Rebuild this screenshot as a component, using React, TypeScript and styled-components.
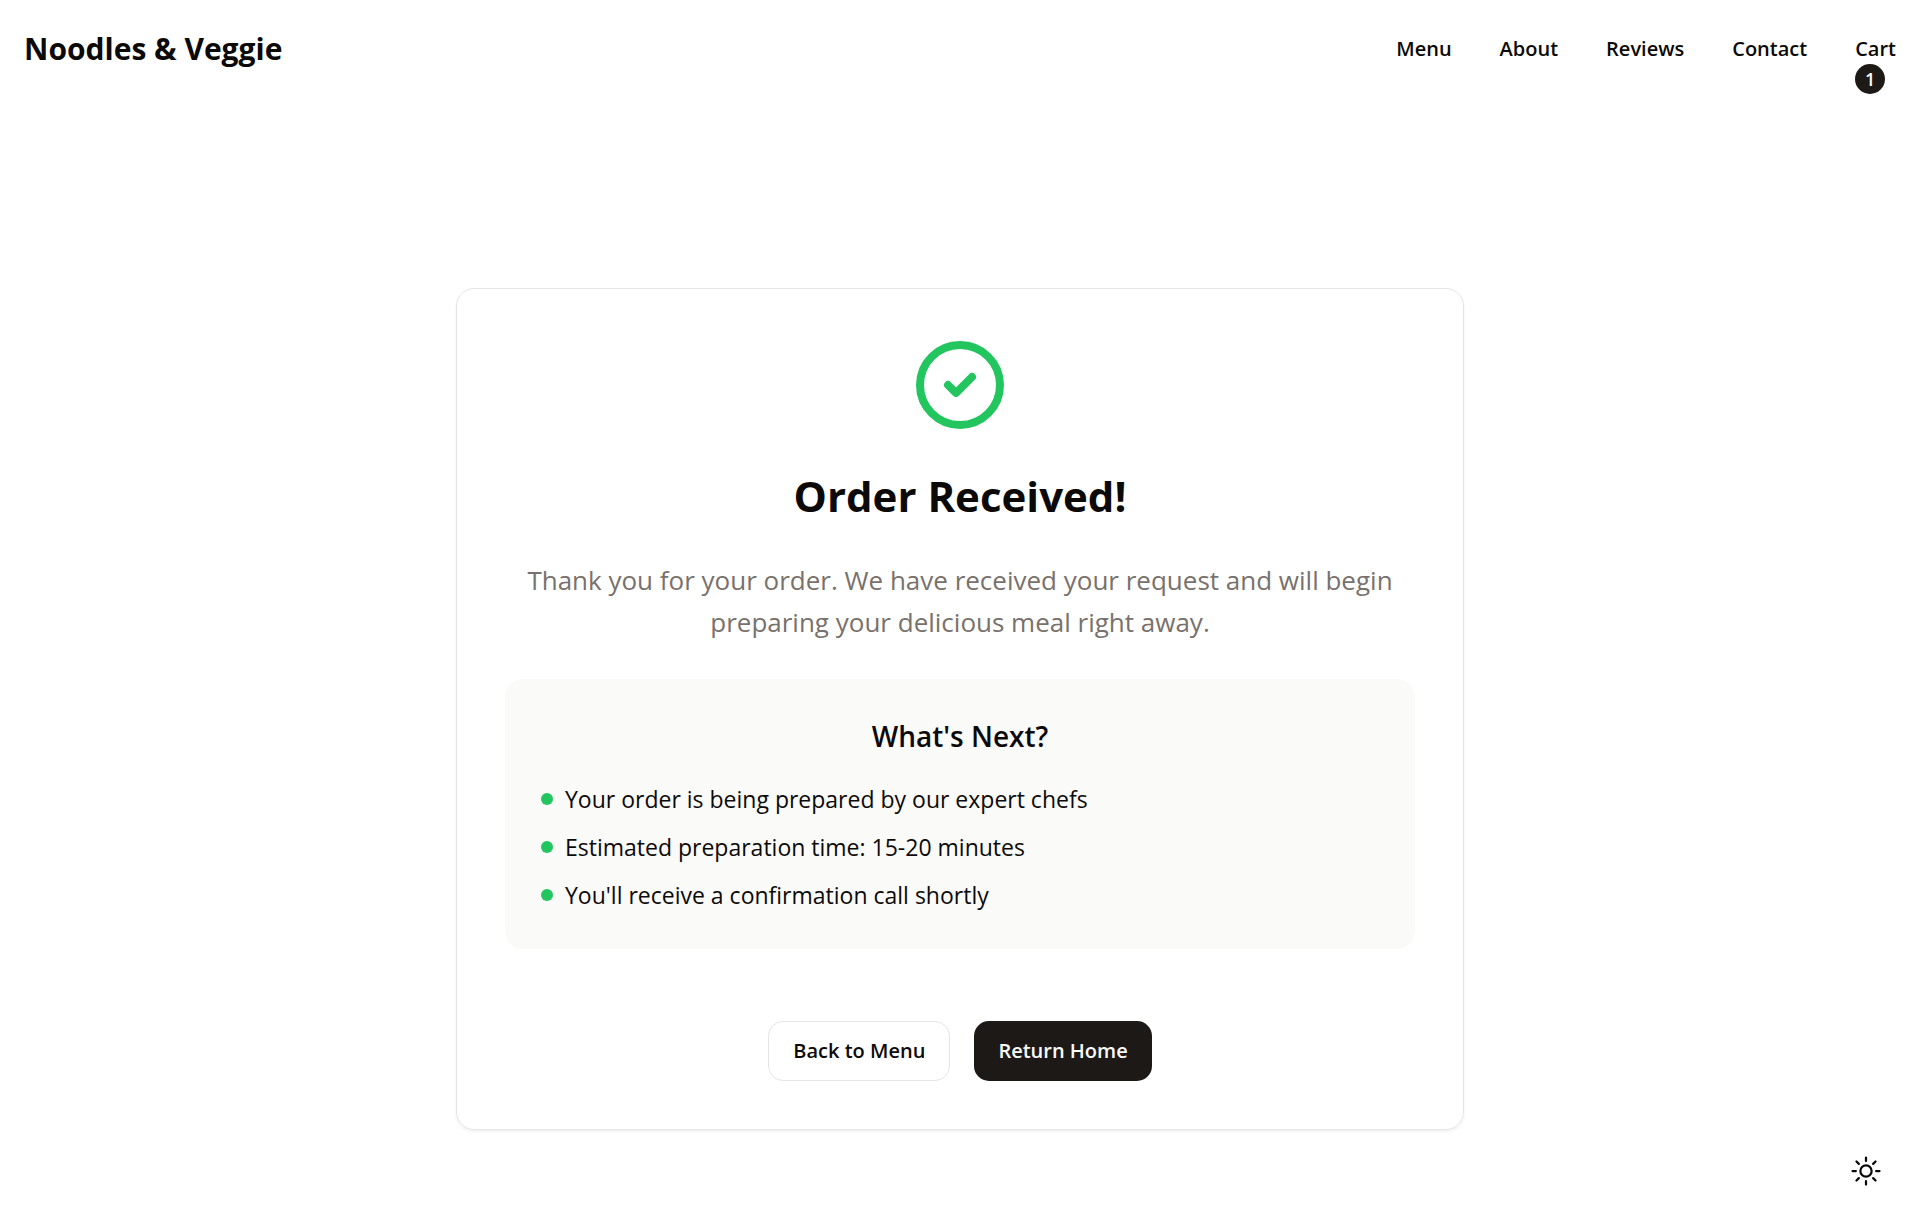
import React from "react";
import styled, { createGlobalStyle } from "styled-components";

const GlobalStyle = createGlobalStyle`
  *, *::before, *::after { box-sizing: border-box; }
  body {
    margin: 0;
    background: #ffffff;
    color: #0c0a09;
    font-family: "Segoe UI", "Open Sans", "Noto Sans", sans-serif;
    font-size: 23px;
    line-height: 36px;
  }
  h1, h2, p, ul { margin: 0; padding: 0; }
`;

const Page = styled.div`
  min-height: 100vh;
  display: flex;
  flex-direction: column;
`;

const Header = styled.header`
  display: flex;
  align-items: center;
  justify-content: space-between;
  min-height: 97px;
  padding: 0 24px;
`;

const Brand = styled.a`
  color: inherit;
  text-decoration: none;
  font-size: 30px;
  line-height: 42px;
  font-weight: 700;
`;

const Nav = styled.nav`
  display: flex;
  gap: 48px;
`;

const NavLink = styled.a`
  position: relative;
  color: inherit;
  text-decoration: none;
  font-size: 20px;
  line-height: 30px;
  font-weight: 600;
`;

const Badge = styled.span`
  position: absolute;
  top: 100%;
  left: 0;
  display: flex;
  align-items: center;
  justify-content: center;
  width: 30px;
  height: 30px;
  border-radius: 50%;
  background: #1c1917;
  color: #fafaf9;
  font-size: 18px;
`;

const Main = styled.main`
  flex: 1;
  display: flex;
  align-items: center;
  justify-content: center;
  padding: 96px 24px 0;
`;

const Card = styled.section`
  display: flex;
  flex-direction: column;
  align-items: center;
  gap: 36px;
  width: 100%;
  max-width: 1008px;
  padding: 48px;
  border: 1px solid #e7e5e4;
  border-radius: 18px;
  box-shadow: 0 2px 3px rgba(0, 0, 0, 0.05);
  text-align: center;
`;

const CheckIcon = styled.svg`
  display: block;
  width: 96px;
  height: 96px;
  fill: none;
  stroke: #22c55e;
  stroke-width: 2;
  stroke-linecap: round;
  stroke-linejoin: round;
`;

const Title = styled.h1`
  font-size: 42px;
  line-height: 54px;
  font-weight: 700;
`;

const Lead = styled.p`
  color: #78716c;
  font-size: 26px;
  line-height: 42px;
`;

const NextPanel = styled.section`
  width: 100%;
  padding: 36px;
  border-radius: 18px;
  background: #fafaf9;
`;

const PanelTitle = styled.h2`
  margin-bottom: 24px;
  font-size: 28px;
  line-height: 42px;
  font-weight: 600;
`;

const Steps = styled.ul`
  display: grid;
  gap: 12px;
  list-style: none;
  text-align: left;
`;

const Step = styled.li`
  display: flex;
  gap: 12px;

  &::before {
    content: "";
    flex: none;
    width: 12px;
    height: 12px;
    margin-top: 12px;
    border-radius: 50%;
    background: #22c55e;
  }
`;

const Actions = styled.div`
  display: flex;
  flex-wrap: wrap;
  justify-content: center;
  gap: 24px;
  padding-top: 36px;
`;

const Button = styled.button<{ $primary?: boolean }>`
  height: 60px;
  padding: 0 24px;
  border: ${(p) => (p.$primary ? "0" : "1px solid #e7e5e4")};
  border-radius: 15px;
  background: ${(p) => (p.$primary ? "#1c1917" : "#ffffff")};
  color: ${(p) => (p.$primary ? "#fafaf9" : "#0c0a09")};
  font-family: inherit;
  font-size: 20px;
  line-height: 30px;
  font-weight: 600;
  cursor: pointer;
`;

const ThemeToggle = styled.button`
  position: fixed;
  right: 24px;
  bottom: 24px;
  display: flex;
  align-items: center;
  justify-content: center;
  width: 60px;
  height: 60px;
  padding: 0;
  border: 0;
  border-radius: 15px;
  background: transparent;
  color: #0c0a09;
  cursor: pointer;
`;

const SunIcon = styled.svg`
  width: 36px;
  height: 36px;
  fill: none;
  stroke: currentColor;
  stroke-width: 1.5;
  stroke-linecap: round;
  stroke-linejoin: round;
`;

const links = ["Menu", "About", "Reviews", "Contact"];
const steps = [
  "Your order is being prepared by our expert chefs",
  "Estimated preparation time: 15-20 minutes",
  "You'll receive a confirmation call shortly",
];

export default function App() {
  return (
    <Page>
      <GlobalStyle />
      <Header>
        <Brand href="#">Noodles &amp; Veggie</Brand>
        <Nav>
          {links.map((link) => (
            <NavLink key={link} href={`#${link.toLowerCase()}`}>
              {link}
            </NavLink>
          ))}
          <NavLink href="#cart">
            Cart
            <Badge>1</Badge>
          </NavLink>
        </Nav>
      </Header>
      <Main>
        <Card>
          <CheckIcon viewBox="0 0 24 24" aria-hidden="true">
            <circle cx="12" cy="12" r="10" />
            <path d="m9 12 2 2 4-4" />
          </CheckIcon>
          <Title>Order Received!</Title>
          <Lead>
            Thank you for your order. We have received your request and will
            begin preparing your delicious meal right away.
          </Lead>
          <NextPanel>
            <PanelTitle>What's Next?</PanelTitle>
            <Steps>
              {steps.map((step) => (
                <Step key={step}>{step}</Step>
              ))}
            </Steps>
          </NextPanel>
          <Actions>
            <Button type="button">Back to Menu</Button>
            <Button type="button" $primary>
              Return Home
            </Button>
          </Actions>
        </Card>
      </Main>
      <ThemeToggle type="button" aria-label="Toggle theme">
        <SunIcon viewBox="0 0 24 24" aria-hidden="true">
          <path d="M12 3v2.25m6.364.386-1.591 1.591M21 12h-2.25m-.386 6.364-1.591-1.591M12 18.75V21m-4.773-4.227-1.591 1.591M5.25 12H3m4.227-4.773L5.636 5.636M15.75 12a3.75 3.75 0 1 1-7.5 0 3.75 3.75 0 0 1 7.5 0Z" />
        </SunIcon>
      </ThemeToggle>
    </Page>
  );
}
